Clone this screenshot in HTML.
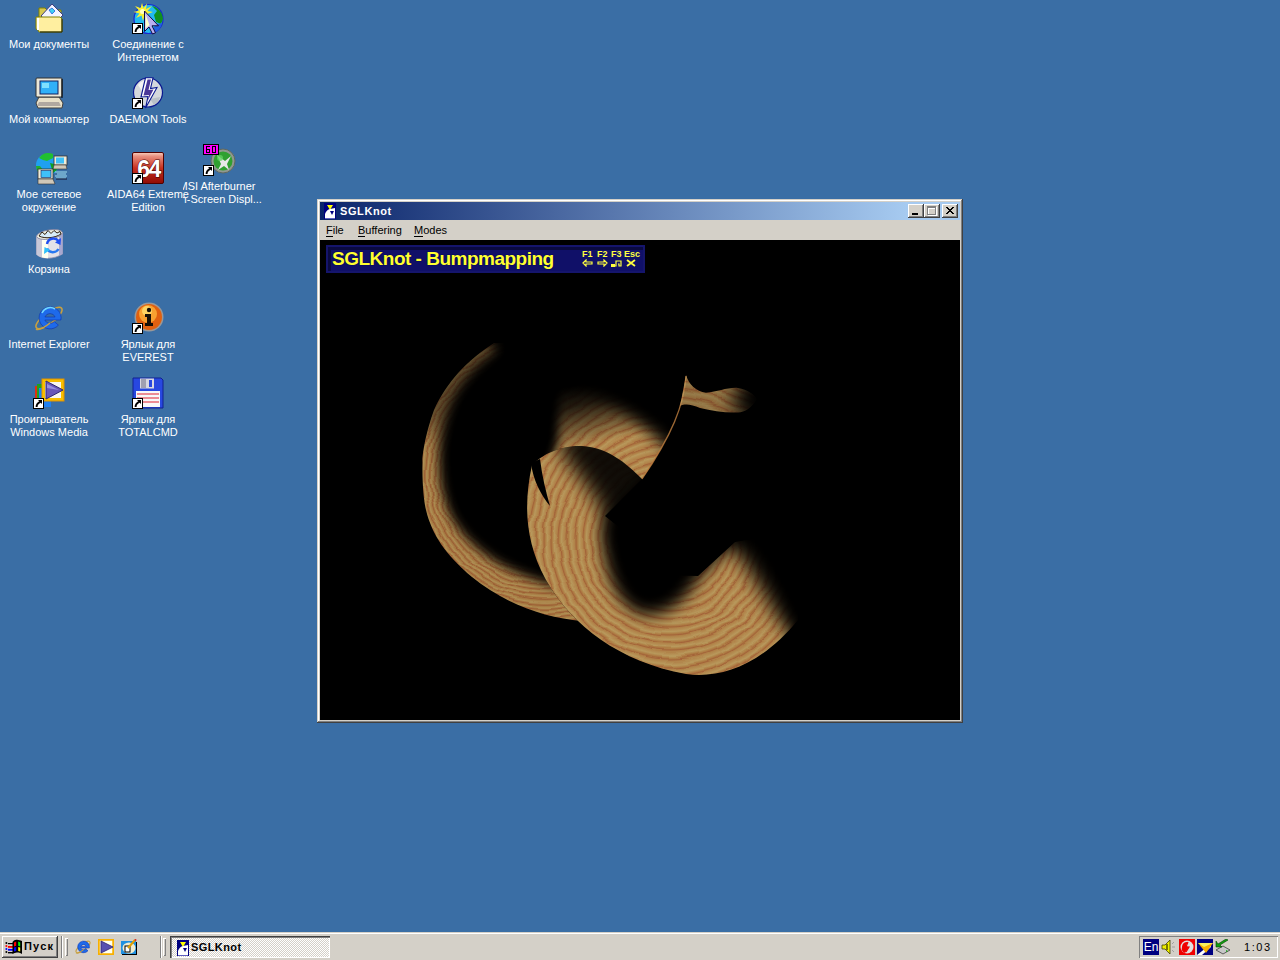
<!DOCTYPE html>
<html><head><meta charset="utf-8">
<style>
*{margin:0;padding:0;box-sizing:border-box}
html,body{width:1280px;height:960px;overflow:hidden;background:#3A6EA5;font-family:"Liberation Sans",sans-serif;font-size:11px;position:relative}
.a{position:absolute}
.lbl{position:absolute;color:#fff;font-size:11px;line-height:13px;text-align:center;white-space:nowrap;width:120px}
.ico{position:absolute;width:32px;height:32px;overflow:visible}
#win{left:317px;top:199px;width:646px;height:524px;background:#D4D0C8;
 box-shadow:inset -1px -1px #404040,inset 1px 1px #D4D0C8,inset -2px -2px #808080,inset 2px 2px #fff}
#title{left:3px;top:3px;width:640px;height:18px;background:linear-gradient(to right,#0A246A 0,#A6CAF0 586px)}
#ttxt{left:20px;top:3px;color:#fff;font-weight:bold;font-size:11px;line-height:13px;letter-spacing:0.6px}
.tb{position:absolute;top:2px;width:16px;height:14px;background:#D4D0C8;
 box-shadow:inset -1px -1px #404040,inset 1px 1px #fff,inset -2px -2px #808080}
#menu{left:3px;top:21px;width:640px;height:20px;background:#D4D0C8}
.mi{position:absolute;top:4px;color:#000;font-size:11px;line-height:13px}
.mi u{text-decoration:none;border-bottom:1px solid #000}
#client{left:3px;top:41px;width:640px;height:480px;background:#000;overflow:hidden}
.fk{color:#FFFF40;font-weight:bold;font-size:9px;line-height:9px}
#taskbar{left:0;top:932px;width:1280px;height:28px;background:#D4D0C8;box-shadow:inset 0 1px #D4D0C8,inset 0 2px #fff}
.btn{background:#D4D0C8;box-shadow:inset -1px -1px #404040,inset 1px 1px #fff,inset -2px -2px #808080}
.grip{box-shadow:inset 1px 1px #fff,inset -1px -1px #808080}
.task{background-color:#fff;background-image:linear-gradient(45deg,#D4D0C8 25%,transparent 25%,transparent 75%,#D4D0C8 75%),linear-gradient(45deg,#D4D0C8 25%,transparent 25%,transparent 75%,#D4D0C8 75%);background-size:2px 2px;background-position:0 0,1px 1px;
 box-shadow:inset 1px 1px #404040,inset 2px 2px #808080,inset -1px -1px #fff}
</style></head><body>
<!-- ===== desktop icons ===== -->
<svg width="0" height="0" style="position:absolute">
 <defs>
  <g id="sc">
   <rect x="0" y="0" width="11" height="11" fill="#000"/>
   <rect x="1" y="1" width="9" height="9" fill="#fff"/>
   <path d="M5 2 L9 2 L9 6 Z" fill="#000"/>
   <path d="M3.6 9 C3.4 6.5 4.8 5 7.6 3.6" stroke="#000" stroke-width="1.9" fill="none"/>
  </g>
 </defs>
</svg>

<!-- Мои документы -->
<svg class="ico" style="left:33px;top:2px" viewBox="0 0 32 32">
 <path d="M6 6 h6 l2 2 h14 v20 h-22 z" fill="#D8C850" stroke="#808000" stroke-width="1"/>
 <path d="M8 14 L19 2 L30 13 L19 24 Z" fill="#F4F4FF" stroke="#404080" stroke-width="1"/>
 <path d="M16 8 l3 -2 l3 3 l-3 3 z" fill="#40D0F0" stroke="#2060E0" stroke-width="0.8"/>
 <path d="M3 15 h24 l2 2 v13 h-23 l-1 -2 l-2 -1 z" fill="#FFEFA0" stroke="#808000" stroke-width="1"/>
 <rect x="4" y="16" width="2" height="12" fill="#fff"/>
 <path d="M29 17 v13 h-22" stroke="#202000" stroke-width="1" fill="none"/>
</svg>
<div class="lbl" style="left:-11px;top:38px">Мои документы</div>

<!-- Соединение с Интернетом -->
<svg class="ico" style="left:132px;top:2px" viewBox="0 0 32 32">
 <circle cx="16.5" cy="17" r="14.5" fill="#22B8F0" stroke="#1828D0" stroke-width="1.2"/>
 <path d="M20 4 C26 5 31 11 31 17 L29 22 L24 20 L22 13 L25 9 Z" fill="#109020"/>
 <path d="M24 22 L30 21 C29 26 26 29 22 31 L21 27 Z" fill="#2060E0"/>
 <path d="M10 1 L11.5 6 L15 1.5 L14 7 L20 4 L15.5 9 L21 10 L15 12 L18 16 L12.5 13.5 L11 19 L9.5 13.5 L4 16 L7.5 11.5 L1.5 10 L7 8.5 L3 4 L8.5 6 Z" fill="#F8F030"/>
 <circle cx="10.5" cy="9.5" r="2.5" fill="#FFFFC0"/>
 <path d="M12.5 9 L12.5 29.5 L17 25 L20.5 32 L23.5 30.8 L20 23.8 L26.5 23.8 Z" fill="#B8B0F0" stroke="#100840" stroke-width="1"/>
 <path d="M13.5 12 L13.5 26.5 L17.5 23 Z" fill="#FFFFC8"/>
 <use href="#sc" x="0" y="21"/>
</svg>
<div class="lbl" style="left:88px;top:38px">Соединение с<br>Интернетом</div>

<!-- Мой компьютер -->
<svg class="ico" style="left:33px;top:77px" viewBox="0 0 32 32">
 <path d="M3 26 l3 -6 h20 l4 6 l-1 5 h-24 z" fill="#E8E0C8" stroke="#404040" stroke-width="1"/>
 <path d="M6 25 h20 l2 4 h-24 z" fill="#B0A8A0"/>
 <rect x="3" y="1" width="26" height="19" rx="1" fill="#ECE8D8" stroke="#303030" stroke-width="1"/>
 <rect x="7" y="4" width="18" height="13" fill="#30B0F8" stroke="#102060" stroke-width="1"/>
 <rect x="9" y="6" width="7" height="5" fill="#80E0FF"/>
 <path d="M29 2 v19" stroke="#000" stroke-width="1"/>
</svg>
<div class="lbl" style="left:-11px;top:113px">Мой компьютер</div>

<!-- DAEMON Tools -->
<svg class="ico" style="left:132px;top:77px" viewBox="0 0 32 32">
 <circle cx="16" cy="15.5" r="14.5" fill="#D4D8DC" stroke="#0A1890" stroke-width="1.2"/>
 <path d="M6 8 A12 12 0 0 1 12 3.5 L10 14 Z" fill="#F4F4F4"/>
 <path d="M22 28 A12 12 0 0 0 28 20 L18 22 Z" fill="#B8C0C8"/>
 <path d="M13.5 0.8 L21 0.8 L18.5 11.5 L25 10.5 L13.5 31 L16 19.5 L9 20 Z" fill="#fff" stroke="#0A1890" stroke-width="1.1" stroke-linejoin="miter"/>
 <path d="M15.5 2.5 L19 2.5 L16.5 13 L21.5 12.5 L15.5 24 L17 18 L11.5 18.5 Z" fill="#4A3898"/>
 <use href="#sc" x="0" y="21"/>
</svg>
<div class="lbl" style="left:88px;top:113px">DAEMON Tools</div>

<!-- Мое сетевое окружение -->
<svg class="ico" style="left:33px;top:152px" viewBox="0 0 32 32">
 <circle cx="14" cy="13" r="11" fill="#20A0F0"/>
 <path d="M6 6 a11 11 0 0 1 14 -4 l0 4 l-6 3 l-4 -1 z" fill="#20C030"/>
 <path d="M3 14 a11 11 0 0 0 4 8 l3 -4 l-3 -4 z" fill="#20B030"/>
 <path d="M17 11 l4 1 l3 6 l-4 3 z" fill="#10A020"/>
 <rect x="21" y="4" width="13" height="9" fill="#F0ECD8" stroke="#303030" stroke-width="0.8"/>
 <rect x="23" y="5.5" width="8" height="6" fill="#40C0F8"/>
 <path d="M21 13 h12 l1 4 h-14 z" fill="#D0C8B8" stroke="#303030" stroke-width="0.6"/>
 <rect x="5" y="17" width="15" height="10" fill="#F0ECD8" stroke="#303030" stroke-width="0.8"/>
 <rect x="8" y="18.5" width="10" height="7" fill="#40C0F8" stroke="#102060" stroke-width="0.6"/>
 <path d="M5 27 h15 l2 5 h-17 z" fill="#D0C8B8" stroke="#303030" stroke-width="0.6"/>
 <path d="M22 20 h12 M24 22 h9 M22 24 h12 M23 26 h10" stroke="#A0E0F0" stroke-width="1"/>
 <path d="M23 27 h11" stroke="#101030" stroke-width="1"/>
</svg>
<div class="lbl" style="left:-11px;top:188px">Мое сетевое<br>окружение</div>

<!-- MSI Afterburner (under AIDA label) -->
<svg class="ico" style="left:203px;top:144px" viewBox="0 0 32 32">
 <circle cx="20" cy="17" r="12" fill="#909890" stroke="#606860" stroke-width="1"/>
 <circle cx="20" cy="17" r="9.5" fill="#30A030"/>
 <path d="M14 11 l8 6 l6 -5 l-4 8 l2 6 l-5 -4 l-6 4 l3 -6 z" fill="#E8E8E8"/>
 <circle cx="17" cy="14" r="3" fill="#60D060" opacity="0.8"/>
 <rect x="0" y="0" width="16" height="11" fill="#000"/>
 <rect x="1" y="1" width="14" height="9" fill="#FF00FF"/>
 <path d="M3 2 h4 v1 h-3 v2 h3 v4 h-4 z M4 6 v2 h2 v-2 z" fill="#000" fill-rule="evenodd"/>
 <path d="M9 2 h4 v7 h-4 z M10 3 v5 h2 v-5 z" fill="#000" fill-rule="evenodd"/>
 <use href="#sc" x="0" y="21"/>
</svg>
<div class="lbl" style="left:157px;top:180px">MSI Afterburner<br>On-Screen Displ...</div>

<div class="a" style="left:107px;top:182px;width:76px;height:33px;background:#3A6EA5"></div>
<!-- AIDA64 -->
<svg class="ico" style="left:132px;top:152px" viewBox="0 0 32 32">
 <defs><linearGradient id="aidg" x1="0" y1="0" x2="0" y2="1"><stop offset="0" stop-color="#F8D0C0"/><stop offset="0.12" stop-color="#E89080"/><stop offset="0.5" stop-color="#C83020"/><stop offset="1" stop-color="#900C04"/></linearGradient></defs>
 <rect x="0.5" y="0.5" width="31" height="31" rx="1.5" fill="url(#aidg)" stroke="#500000" stroke-width="1"/>
 <text x="16.5" y="24.5" text-anchor="middle" font-family="Liberation Sans" font-weight="bold" font-size="23" fill="#fff" stroke="#400000" stroke-width="1" paint-order="stroke" letter-spacing="-1.5">64</text>
 <use href="#sc" x="0" y="21"/>
</svg>
<div class="lbl" style="left:88px;top:188px">AIDA64 Extreme<br>Edition</div>

<!-- Корзина -->
<svg class="ico" style="left:33px;top:227px" viewBox="0 0 32 32">
 <path d="M3.5 9 L3.5 27.5 C9 32.5 21 32.5 29.5 27 L29.5 5.5 Z" fill="#E4E2E8" stroke="#9090B0" stroke-width="0.8"/>
 <path d="M3.5 9 L3.5 27.5 C5 29 7 30 9 30.5 L9 11 Z" fill="#C8C8D8"/>
 <path d="M9 11 L9 30.5 C11 31 13 31.2 15 31.2 L15 11.5 Z" fill="#FFFFF0"/>
 <path d="M26 8 L26 28.5 C27.5 28 28.5 27.5 29.5 27 L29.5 5.5 Z" fill="#A8A8D0"/>
 <ellipse cx="16.5" cy="7.5" rx="13" ry="4.6" transform="rotate(-9 16.5 7.5)" fill="#F0F0E0" stroke="#8080A0" stroke-width="0.8"/>
 <path d="M6 9 L9 5 L12 7.5 L15 3.5 L18 6.5 L21 3.5 L24 6 L27 4.5 L28 7 C22 11 12 12 6 9 Z" fill="#D8ECF8" stroke="#302010" stroke-width="1"/>
 <path d="M25.5 14 A6.5 6.5 0 0 0 14 17" stroke="#2050F0" stroke-width="2.4" fill="none"/>
 <path d="M14 21.5 A6.5 6.5 0 0 0 25.5 22" stroke="#2878F0" stroke-width="2.4" fill="none"/>
 <path d="M28 11 L27.5 18 L22 15.5 Z" fill="#2050F0"/>
 <path d="M11 27 L11.5 20 L17 23 Z" fill="#30C0F8"/>
</svg>
<div class="lbl" style="left:-11px;top:263px">Корзина</div>

<!-- Internet Explorer -->
<svg class="ico" style="left:33px;top:302px" viewBox="0 0 32 32">
 <ellipse cx="16" cy="16" rx="16" ry="5.5" transform="rotate(-38 16 16)" fill="none" stroke="#C8A040" stroke-width="1.6"/>
 <path d="M27.9 18 A11 11 0 1 0 25.4 23.1 L21.2 19.5 A5.5 5.5 0 0 1 11.9 18 Z M11.9 15 A5.5 5.5 0 0 1 22.1 15 Z" fill="#1E6AEA" fill-rule="evenodd" stroke="#0A30B0" stroke-width="0.6"/>
 <path d="M9 11 A9 9 0 0 1 22 7" stroke="#70D8FF" stroke-width="1.5" fill="none"/>
 <path d="M3 27 C6 29 12 25 17 21" stroke="#C8A040" stroke-width="1.6" fill="none"/>
</svg>
<div class="lbl" style="left:-11px;top:338px">Internet Explorer</div>

<!-- EVEREST -->
<svg class="ico" style="left:132px;top:302px" viewBox="0 0 32 32">
 <circle cx="17" cy="15" r="14.5" fill="#9A9898"/>
 <circle cx="17" cy="15" r="13" fill="#E06010"/>
 <circle cx="16" cy="12" r="9" fill="#F8A030"/>
 <circle cx="15" cy="9" r="5" fill="#FFE070" opacity="0.8"/>
 <circle cx="17" cy="8" r="2.2" fill="#181008"/>
 <path d="M13 12 h6 v9 h2 v3 h-8 v-3 h2 v-6 h-2 z" fill="#181008"/>
 <use href="#sc" x="0" y="21"/>
</svg>
<div class="lbl" style="left:88px;top:338px">Ярлык для<br>EVEREST</div>

<!-- Windows Media -->
<svg class="ico" style="left:33px;top:377px" viewBox="0 0 32 32">
 <rect x="2" y="9" width="12" height="20" fill="#E03010"/>
 <rect x="4" y="7" width="12" height="20" fill="#20A020"/>
 <rect x="6" y="11" width="12" height="19" fill="#2080F0"/>
 <rect x="9" y="2" width="22" height="22" fill="#F8C000" stroke="#E09000" stroke-width="1"/>
 <rect x="12" y="5" width="16" height="16" fill="#F8F8F0"/>
 <path d="M13 4 L30 13 L13 22 Z" fill="#6858B8" stroke="#302870" stroke-width="1"/>
 <path d="M14 7 L26 13 L14 11 Z" fill="#9890E0"/>
 <use href="#sc" x="0" y="21"/>
</svg>
<div class="lbl" style="left:-11px;top:413px">Проигрыватель<br>Windows Media</div>

<!-- TOTALCMD -->
<svg class="ico" style="left:132px;top:377px" viewBox="0 0 32 32">
 <path d="M1 1 h28 l2 2 v28 h-30 z" fill="#2848E0" stroke="#102090" stroke-width="1"/>
 <rect x="8" y="1.5" width="14" height="10" fill="#D8D8E0"/>
 <rect x="9" y="2" width="5" height="9" fill="#A0A0B0"/>
 <rect x="17" y="3" width="3" height="7" fill="#2848E0"/>
 <rect x="4" y="14" width="24" height="16" fill="#F8F8F8"/>
 <path d="M5 17 h22 M5 21 h22 M5 25 h22" stroke="#E02030" stroke-width="1.2"/>
 <use href="#sc" x="0" y="21"/>
</svg>
<div class="lbl" style="left:88px;top:413px">Ярлык для<br>TOTALCMD</div>
<!-- ===== window ===== -->
<div id="win" class="a">
 <div id="title" class="a">
  <svg class="a" style="left:4px;top:1px" width="12" height="16" viewBox="0 0 12 16">
   <rect width="12" height="16" fill="#000080"/>
   <path d="M3 2 h6 l-3 5 z" fill="#FFFF00"/>
   <path d="M1 15 L1 11 C2 8 4 6.5 6 6 L11 5 L11 15 Z" fill="#fff"/>
   <path d="M6 8 h4 l-2 4 z" fill="#000080"/>
   <rect x="1" y="15" width="10" height="1" fill="#6060C0"/>
  </svg>
  <div id="ttxt" class="a">SGLKnot</div>
  <div class="tb" style="left:588px"><div class="a" style="left:4px;top:9px;width:6px;height:2px;background:#000"></div></div>
  <div class="tb" style="left:604px">
   <div class="a" style="left:4px;top:3px;width:9px;height:9px;border:1px solid #fff;border-top-width:2px"></div>
   <div class="a" style="left:3px;top:2px;width:9px;height:9px;border:1px solid #808080;border-top-width:2px"></div>
  </div>
  <div class="tb" style="left:622px">
   <svg class="a" style="left:4px;top:3px" width="8" height="7" viewBox="0 0 8 7" shape-rendering="crispEdges">
    <path d="M0 0h2v1h-2z M6 0h2v1h-2z M1 1h2v1h-2z M5 1h2v1h-2z M2 2h4v1h-4z M3 3h2v1h-2z M2 4h4v1h-4z M1 5h2v1h-2z M5 5h2v1h-2z M0 6h2v1h-2z M6 6h2v1h-2z" fill="#000"/>
   </svg>
  </div>
 </div>
 <div id="menu" class="a">
  <div class="mi" style="left:6px"><u>F</u>ile</div>
  <div class="mi" style="left:38px"><u>B</u>uffering</div>
  <div class="mi" style="left:94px"><u>M</u>odes</div>
 </div>
 <div id="client" class="a">
  <svg class="a" style="left:0;top:0" width="640" height="480" viewBox="0 0 640 480">
 <defs>
  <radialGradient id="woodA" gradientUnits="userSpaceOnUse" cx="225" cy="235" r="5" spreadMethod="repeat">
   <stop offset="0" stop-color="#BC8648"/><stop offset="0.45" stop-color="#C8A460"/>
   <stop offset="0.74" stop-color="#BA7C44"/><stop offset="0.88" stop-color="#B06A3C"/><stop offset="1" stop-color="#BC8648"/>
  </radialGradient>
  <radialGradient id="woodB" gradientUnits="userSpaceOnUse" cx="350" cy="300" r="8" spreadMethod="repeat">
   <stop offset="0" stop-color="#C08C4E"/><stop offset="0.45" stop-color="#C8A664"/>
   <stop offset="0.74" stop-color="#BC8448"/><stop offset="0.88" stop-color="#B26C3E"/><stop offset="1" stop-color="#C08C4E"/>
  </radialGradient>
  <filter id="wob" x="0" y="0" width="100%" height="100%">
   <feTurbulence type="fractalNoise" baseFrequency="0.03 0.05" numOctaves="2" seed="7" result="t"/>
   <feDisplacementMap in="SourceGraphic" in2="t" scale="8" xChannelSelector="R" yChannelSelector="G"/>
  </filter>
  <filter id="bl5" x="-50%" y="-50%" width="200%" height="200%" color-interpolation-filters="sRGB"><feGaussianBlur stdDeviation="5"/></filter>
  <filter id="bl8" x="-50%" y="-50%" width="200%" height="200%" color-interpolation-filters="sRGB"><feGaussianBlur stdDeviation="8"/></filter>
  <filter id="bl6" x="-50%" y="-50%" width="200%" height="200%" color-interpolation-filters="sRGB"><feGaussianBlur stdDeviation="6"/></filter>
  <filter id="bl7" x="-50%" y="-50%" width="200%" height="200%" color-interpolation-filters="sRGB"><feGaussianBlur stdDeviation="7"/></filter>
  <filter id="bl10" x="-50%" y="-50%" width="200%" height="200%" color-interpolation-filters="sRGB"><feGaussianBlur stdDeviation="10"/></filter>
  <filter id="bl14" x="-50%" y="-50%" width="200%" height="200%" color-interpolation-filters="sRGB"><feGaussianBlur stdDeviation="14"/></filter>

  <linearGradient id="gC" gradientUnits="userSpaceOnUse" x1="262" y1="142" x2="276" y2="204">
   <stop offset="0" stop-color="#000"/><stop offset="0.35" stop-color="#333"/><stop offset="1" stop-color="#fff"/>
  </linearGradient>
  <mask id="mA" maskUnits="userSpaceOnUse" x="0" y="0" width="640" height="480">
   <path d="M174 103 C146 121 127 142 114 170 C106 192 102 215 102.5 222 C102 245 104 262 106 270 C112 295 126 315 152 337 C185 364 225 378 262 381 L300 380 L300 250 L260 250 L240 103 Z" fill="#fff"/>
   <path d="M176 109 C156 124 140 142 131 162 C123 182 118 202 119 224 C120 250 126 270 136 285 C148 302 166 318 193 331 C213 340 238 348 262 352 L330 352 L330 40 L150 40 Z" fill="#000" filter="url(#bl6)"/>
   <ellipse cx="178" cy="92" rx="16" ry="16" fill="#000" filter="url(#bl8)"/>
   <ellipse cx="125" cy="125" rx="55" ry="70" fill="#000" opacity="0.45" filter="url(#bl14)"/>
  </mask>
  <mask id="mC" maskUnits="userSpaceOnUse" x="0" y="0" width="640" height="480">
   <path d="M218 222 L226 130 L300 110 L367 130 C364 165 352 195 322 239 L300 240 Z" fill="url(#gC)"/>
   <path d="M180 60 L236 60 L239 120 L238 200 L226 245 L180 245 Z" fill="#000" filter="url(#bl5)"/>
   <path d="M200 40 L420 40 L420 260 L352 214 C337 197 316 178 290 162 C270 150 250 142 236 139 Z" fill="#000" filter="url(#bl8)"/>
  </mask>
  <mask id="mD" maskUnits="userSpaceOnUse" x="0" y="0" width="640" height="480">
   <path d="M366 135 C369 145 376 151 386 152.8 C398 152 408 147 418 148 C428 150 434 154 437 159 C432 168 425 172 418 172.5 C405 173 392 171 380 168 C372 165 366 163 360 166 Z" fill="#fff"/>
   <ellipse cx="445" cy="160" rx="32" ry="26" fill="#000" filter="url(#bl10)"/>
  </mask>
  <mask id="mB" maskUnits="userSpaceOnUse" x="0" y="0" width="640" height="480">
   <path d="M212 225 C204 262 204 300 226 340 C252 386 300 422 366 434 C402 439 442 424 478 380 L480 290 L415 302 L378 336 L345 335 L318 302 L285 276 L322 239 C305 222 288 208 262 206 C240 205 222 215 212 225 Z" fill="#fff"/>
   <path d="M345 200 L322 239 L298 264 C284 276 280 292 283 305 C286 330 295 365 322 374 C345 378 365 362 378 338 L415 302 L500 290 L500 150 L360 150 Z" fill="#000" filter="url(#bl8)"/>
   <path d="M240 190 L345 190 L345 300 L296 300 C288 282 280 265 270 250 C260 236 252 226 242 214 Z" fill="#000" opacity="0.9" filter="url(#bl10)"/>
   <path d="M396 288 L411 305 C421 318 429 328 435 338 C444 352 451 364 457 376 L472 393 L560 420 L560 240 L430 240 Z" fill="#000" filter="url(#bl10)"/>
   <rect x="474" y="250" width="80" height="220" fill="#000" filter="url(#bl8)"/>
  </mask>
 </defs>

 <rect x="90" y="90" width="230" height="300" fill="url(#woodA)" filter="url(#wob)" mask="url(#mA)" opacity="0.88"/>
 <rect x="200" y="95" width="180" height="150" fill="url(#woodB)" filter="url(#wob)" mask="url(#mC)" opacity="0.92"/>
 <path d="M366 136 C364 165 352 195 322 239" stroke="#C08040" stroke-width="1.3" opacity="0.8" fill="none"/>
 <rect x="355" y="125" width="100" height="55" fill="url(#woodB)" filter="url(#wob)" mask="url(#mD)" opacity="0.75"/>
 <path d="M212 225 C204 262 204 300 226 340 C252 386 300 422 366 434 C402 439 442 424 478 380 L480 290 L415 302 L378 336 L345 335 L318 302 L285 276 L322 239 C305 222 288 208 262 206 C240 205 222 215 212 225 Z" fill="#000"/>
 <rect x="195" y="195" width="300" height="250" fill="url(#woodB)" filter="url(#wob)" mask="url(#mB)" opacity="0.92"/>
 <!-- dark curl slit on B tip -->
 <path d="M211 223 C213 240 221 255 230 266 C226 252 222 236 220 219 Z" fill="#000"/>
</svg>

  <div class="a" style="left:6px;top:5px;width:319px;height:28px;background:#15156C"></div>
  <div class="a" style="left:8px;top:7px;width:315px;height:24px;background:#0A0A40"></div>
  <div class="a" style="left:11px;top:10px;width:312px;height:21px;background:#101068"></div>
  <div class="a" id="btxt" style="left:12px;top:8px;color:#FFFF30;font-weight:bold;font-size:19px;line-height:22px;letter-spacing:-0.5px;white-space:nowrap;text-shadow:0 0 1px #000050,0 0 1px #000050">SGLKnot - Bumpmapping</div>
  <div class="a fk" style="left:262px;top:10px">F1</div>
  <div class="a fk" style="left:277px;top:10px">F2</div>
  <div class="a fk" style="left:291px;top:10px">F3</div>
  <div class="a fk" style="left:304px;top:10px">Esc</div>
  <svg class="a" style="left:262px;top:19px" width="60" height="8" viewBox="0 0 60 8" fill="none" stroke="#FFFF40" stroke-width="1.2">
   <path d="M1 4 L4 1 V3 H10 V5 H4 V7 Z"/>
   <path d="M25 4 L22 1 V3 H16 V5 H22 V7 Z"/>
   <path d="M30 7 h4 v-5 h5 v5 h-2 v-2 h-1" />
   <rect x="29" y="5" width="4" height="3" fill="#FFFF40" stroke="none"/>
   <path d="M45 1 L53 7 M53 1 L45 7" stroke-width="1.8"/>
  </svg>
 </div>
</div>

<!-- ===== taskbar ===== -->
<div id="taskbar" class="a">
 <div class="btn a" style="left:2px;top:4px;width:56px;height:22px"></div>
 <svg class="a" style="left:2px;top:4px" width="24" height="22" viewBox="0 0 24 22">
  <circle cx="4.4" cy="7" r="1" fill="#000"/><circle cx="4.4" cy="10" r="1" fill="#F00"/>
  <circle cx="4.4" cy="13" r="1" fill="#00F"/><circle cx="4.4" cy="16" r="1" fill="#000"/>
  <path d="M6 7 h5 v1.2 h-5z" fill="#000"/><path d="M6 10 h5 v1.8 h-5z" fill="#F00"/>
  <path d="M6 12.9 h5 v1.8 h-5z" fill="#00F"/><path d="M6 16 h5 v1.4 h-5z" fill="#000"/>
  <path d="M10.5 6 C12 4.2 13 3.6 15 3.8 C17 4 18 4.2 20 5 L20 18 C18 17 17 16.6 15 16.6 C13 16.6 12 17.4 10.5 18 Z" fill="#000"/>
  <path d="M12 6.6 L14.2 5.6 L14.2 9.8 L12 10.6 Z" fill="#F00"/>
  <path d="M16.2 5.6 L18.2 6.4 L18.2 10.4 L16.2 9.8 Z" fill="#0F0"/>
  <path d="M12 11.6 L14.2 11 L14.2 15 L12 15.6 Z" fill="#00F"/>
  <path d="M16.2 11 L18.2 11.6 L18.2 15.6 L16.2 15 Z" fill="#FF0"/>
 </svg>
 <div class="a" style="left:24px;top:8px;font-weight:bold;font-size:11px;line-height:13px;color:#000;letter-spacing:1.2px">Пуск</div>
 <div class="a" style="left:61px;top:4px;width:1px;height:22px;background:#808080"></div>
 <div class="a" style="left:62px;top:4px;width:1px;height:22px;background:#fff"></div>
 <div class="a grip" style="left:65px;top:6px;width:3px;height:18px"></div>

 <!-- quick launch -->
 <svg class="a" style="left:75px;top:7px" width="16" height="16" viewBox="1 1 30 30">
  <ellipse cx="16" cy="16" rx="16" ry="5.5" transform="rotate(-38 16 16)" fill="none" stroke="#C8A040" stroke-width="2"/>
  <path d="M27.9 18 A11 11 0 1 0 25.4 23.1 L21.2 19.5 A5.5 5.5 0 0 1 11.9 18 Z M11.9 15 A5.5 5.5 0 0 1 22.1 15 Z" fill="#1E6AEA" fill-rule="evenodd" stroke="#0A30B0" stroke-width="1"/>
  <path d="M3 27 C6 29 12 25 17 21" stroke="#C8A040" stroke-width="2" fill="none"/>
 </svg>
 <svg class="a" style="left:98px;top:7px" width="16" height="16" viewBox="0 0 16 16">
  <rect x="0.5" y="0.5" width="15" height="15" fill="#FFFFF0" stroke="#F8B000" stroke-width="2.5"/>
  <path d="M3 2 L15 8 L3 14 Z" fill="#5850B0" stroke="#302070" stroke-width="0.8"/>
 </svg>
 <svg class="a" style="left:121px;top:7px" width="16" height="16" viewBox="0 0 16 16">
  <rect x="0" y="2" width="15" height="13" fill="#2090E0"/>
  <rect x="15" y="3" width="1" height="13" fill="#000"/><rect x="1" y="15" width="15" height="1" fill="#000"/>
  <ellipse cx="8" cy="9" rx="6.5" ry="5.5" fill="#F0ECD0"/>
  <rect x="4" y="7" width="5" height="6" fill="#fff" stroke="#000" stroke-width="1"/>
  <path d="M7 9 L14 1" stroke="#E0A000" stroke-width="2"/>
  <circle cx="14.5" cy="1" r="1" fill="#E02020"/>
 </svg>
 <div class="a" style="left:160px;top:4px;width:1px;height:22px;background:#808080"></div>
 <div class="a" style="left:161px;top:4px;width:1px;height:22px;background:#fff"></div>
 <div class="a grip" style="left:163px;top:6px;width:3px;height:18px"></div>

 <!-- task button -->
 <div class="a task" style="left:170px;top:4px;width:160px;height:22px"></div>
 <svg class="a" style="left:177px;top:8px" width="12" height="16" viewBox="0 0 12 16">
   <rect width="12" height="16" fill="#000080"/>
   <path d="M3 2 h6 l-3 5 z" fill="#FFFF00"/>
   <path d="M1 15 L1 11 C2 8 4 6.5 6 6 L11 5 L11 15 Z" fill="#fff"/>
   <path d="M6 8 h4 l-2 4 z" fill="#000080"/>
   <rect x="1" y="15" width="10" height="1" fill="#6060C0"/>
 </svg>
 <div class="a" style="left:191px;top:9px;font-weight:bold;font-size:11px;line-height:13px;color:#000;letter-spacing:0.4px">SGLKnot</div>

 <!-- tray -->
 <div class="a" style="left:1139px;top:4px;width:139px;height:22px;box-shadow:inset 1px 1px #808080,inset -1px -1px #fff"></div>
 <div class="a" style="left:1143px;top:7px;width:16px;height:16px;background:#000080;color:#fff;font-size:12px;line-height:16px;text-align:center">En</div>
 <svg class="a" style="left:1161px;top:7px" width="16" height="16" viewBox="0 0 16 16">
  <path d="M1 6 h3 l5 -5 v14 l-5 -5 h-3 z" fill="#F0F000" stroke="#404000" stroke-width="0.8"/>
  <path d="M6 5 v6" stroke="#000" stroke-width="1"/>
  <path d="M11 5 l2 -2 M11 8 h3 M11 11 l2 2" stroke="#A0A0A0" stroke-width="1"/>
 </svg>
 <svg class="a" style="left:1179px;top:7px" width="16" height="16" viewBox="0 0 16 16">
  <rect width="16" height="16" fill="#F00000"/>
  <circle cx="8" cy="8" r="6.5" fill="#E0E0E0"/>
  <path d="M3 8 a5 5 0 0 1 6 -5 l-2 4 l3 1 l-4 6 a5 5 0 0 1 -3 -6z" fill="#F00000"/>
  <path d="M9 3 l-2 5 h3 l-3 5" stroke="#F00000" stroke-width="1.2" fill="none"/>
 </svg>
 <svg class="a" style="left:1197px;top:7px" width="16" height="16" viewBox="0 0 16 16">
  <rect width="16" height="16" fill="#000080"/>
  <path d="M0 16 L14 5 L14 8 L5 16 Z" fill="#fff"/>
  <path d="M1 4 L16 4 L9 14 Z" fill="#F8B000"/>
  <path d="M1 4 L16 4 L7 8 Z" fill="#F8F060"/>
 </svg>
 <svg class="a" style="left:1215px;top:7px" width="16" height="16" viewBox="0 0 16 16">
  <path d="M1 11 l7 -4 l7 4 l-7 4 z" fill="#C8C8C8" stroke="#404040" stroke-width="0.8"/>
  <path d="M1 2 v6 h6 l-2 -2 l8 -5 l-2 -1 l-8 5 z" fill="#10A010" stroke="#004000" stroke-width="0.6"/>
  <path d="M11 11 l2 1 l-2 1 z" fill="#10A010"/>
 </svg>
 <div class="a" style="left:1244px;top:9px;font-size:11px;line-height:13px;color:#000;letter-spacing:1.6px">1:03</div>
</div>

</body></html>
